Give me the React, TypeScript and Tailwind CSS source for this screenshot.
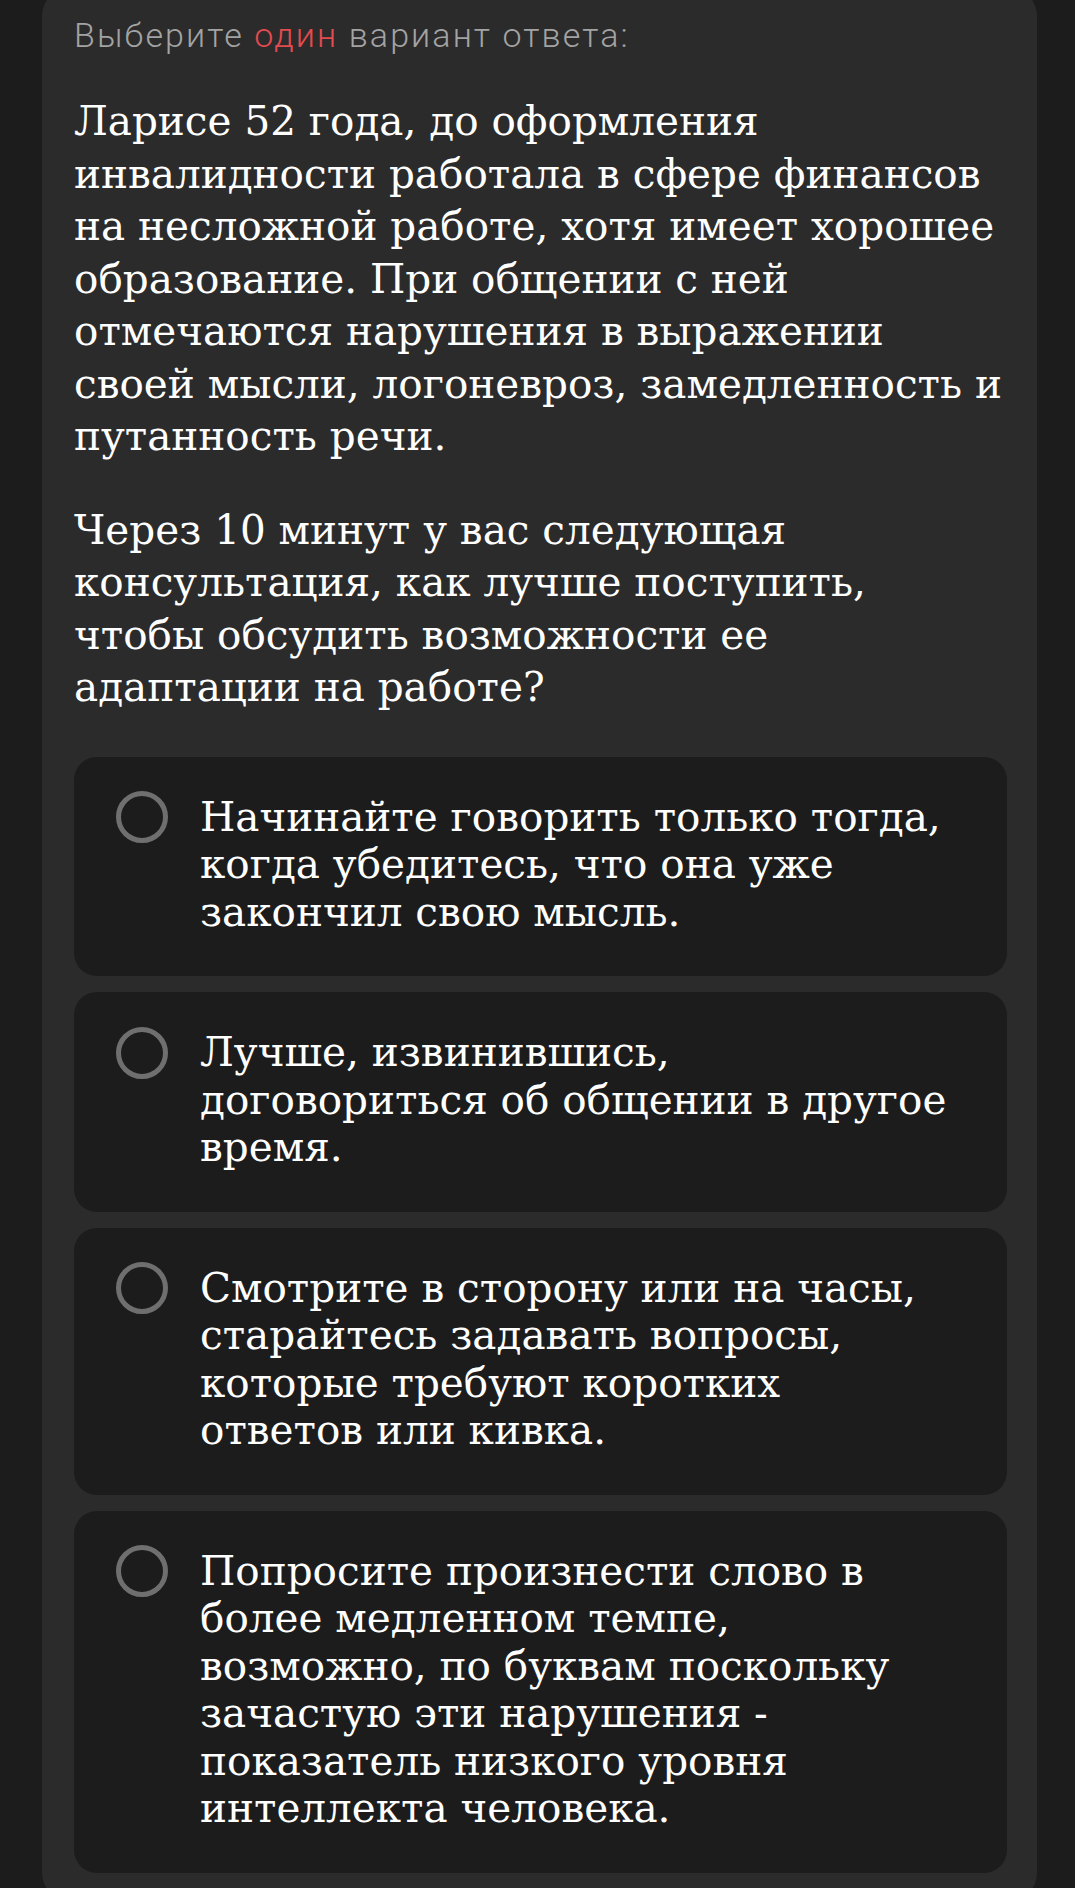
import { useState } from 'react';

// lines are kept as in the source layout so the wrapping matches
const QUESTION = [
  [
    'Ларисе 52 года, до оформления',
    'инвалидности работала в сфере финансов',
    'на несложной работе, хотя имеет хорошее',
    'образование. При общении с ней',
    'отмечаются нарушения в выражении',
    'своей мысли, логоневроз, замедленность и',
    'путанность речи.',
  ],
  [
    'Через 10 минут у вас следующая',
    'консультация, как лучше поступить,',
    'чтобы обсудить возможности ее',
    'адаптации на работе?',
  ],
];

const OPTIONS = [
  ['Начинайте говорить только тогда,', 'когда убедитесь, что она уже', 'закончил свою мысль.'],
  ['Лучше, извинившись,', 'договориться об общении в другое', 'время.'],
  ['Смотрите в сторону или на часы,', 'старайтесь задавать вопросы,', 'которые требуют коротких', 'ответов или кивка.'],
  [
    'Попросите произнести слово в',
    'более медленном темпе,',
    'возможно, по буквам поскольку',
    'зачастую эти нарушения -',
    'показатель низкого уровня',
    'интеллекта человека.',
  ],
];

export default function App() {
  const [selected, setSelected] = useState<number | null>(null);

  return (
    <div className="min-h-screen bg-[#1c1c1c] overflow-hidden">
      <div className="ml-[42px] mr-[38px] mt-[-12px] rounded-[28px] bg-[#2b2b2b] pt-[27px] pb-[28px] pl-[32px] pr-[30px]">
        <p className="text-[34px] leading-[40px] font-light tracking-[2.1px] text-[#a3a3a3] font-['Roboto',sans-serif]">
          Выберите <span className="text-[#e34b50]">один</span> вариант ответа:
        </p>

        <div className="mt-[40px] space-y-[41px] text-white text-[40.5px] leading-[52.5px] font-['DejaVu_Serif',serif]">
          {QUESTION.map((lines, i) => (
            <p key={i}>
              {lines.map((l) => (
                <span key={l} className="block whitespace-nowrap">
                  {l}
                </span>
              ))}
            </p>
          ))}
        </div>

        <div className="mt-[43px] flex flex-col gap-[16px]">
          {OPTIONS.map((lines, i) => (
            <button
              key={i}
              onClick={() => setSelected(i)}
              className="flex items-start text-left rounded-[23px] bg-[#1c1c1c] pl-[42px] pr-[42px] pt-[37px] pb-[40px]"
            >
              <span className="flex h-[47.5px] shrink-0 items-center">
                <span
                  className={
                    selected === i
                      ? 'block h-[52px] w-[52px] rounded-full border-[5px] border-[#e34b50]'
                      : 'block h-[52px] w-[52px] rounded-full border-[5px] border-[#6f6f6f]'
                  }
                />
              </span>
              <span className="ml-[32px] text-white text-[40.5px] leading-[47.5px] font-['DejaVu_Serif',serif]">
                {lines.map((l) => (
                  <span key={l} className="block whitespace-nowrap">
                    {l}
                  </span>
                ))}
              </span>
            </button>
          ))}
        </div>
      </div>
    </div>
  );
}
